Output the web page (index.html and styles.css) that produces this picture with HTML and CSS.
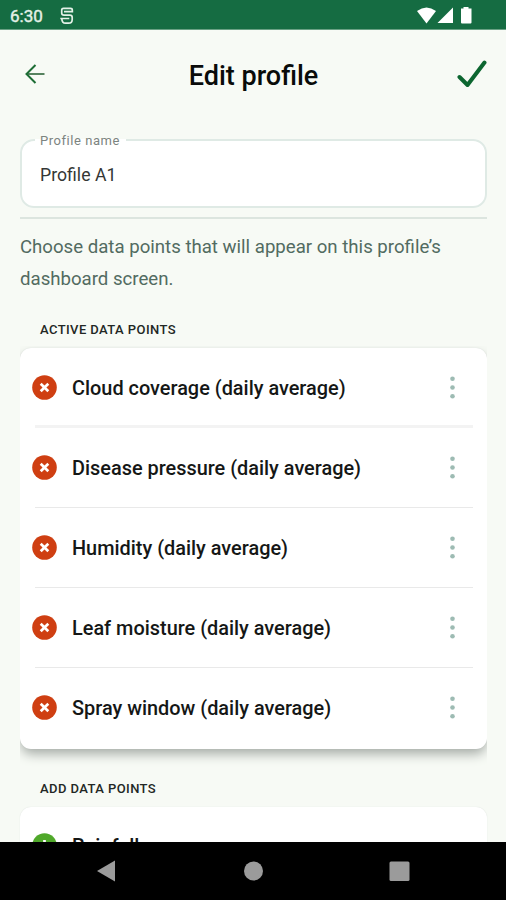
FILE: index.html
```html
<!DOCTYPE html>
<html lang="en">
<head>
<meta charset="utf-8">
<title>Edit profile</title>
<link rel="stylesheet" href="styles.css">
</head>
<body>
<svg class="defs" width="0" height="0" aria-hidden="true">
  <symbol id="remove" viewBox="0 0 25 25"><circle cx="12.5" cy="12.5" r="12.3" fill="#cf3f12"/><path d="M8.7 8.7l7.6 7.6M16.300 8.700l-7.600 7.600" stroke="#fff" stroke-width="2.7"/></symbol>
  <symbol id="more" viewBox="0 0 6 24"><g fill="#9dbbb3"><circle cx="2.5" cy="2.700" r="2.3"/><circle cx="2.5" cy="11.500" r="2.3"/><circle cx="2.5" cy="20.200" r="2.3"/></g></symbol>
</svg>
<div class="phone">
  <div class="status">
    <span class="time">6:30</span>
    <svg class="app-mark" width="14" height="18" viewBox="0 0 14 18" fill="none" stroke="#e4f1e7" stroke-width="1.7"><path d="M12.300 4.500V3Q12.300 1.400 10.500 1.400H3.500Q1.700 1.400 1.700 3.200V6Q1.700 8.200 4 8.200H9.800Q12.200 8.200 12.200 10.500V12.500Q12.200 16.200 8.500 16.200H5.500Q2 16.200 1.800 11.700M4 4.700H13.200M.3 11.500H9.300"/></svg>
    <svg class="signals" width="56" height="17" viewBox="0 0 56 17" fill="#fff"><path d="M0 4Q9.500-3 19 4L9.500 16.500Z"/><path d="M36 .5V16H20.500Z"/><path d="M46.500 0h5v1.500h3V15.500Q54.500 16.500 53.500 16.500H45Q44 16.500 44 15.500V1.500h2.500Z"/></svg>
  </div>
  <header class="header">
    <svg width="20" height="20" viewBox="0 0 20 20" fill="none" stroke-width="2"><path d="M1.500 10H19.500" stroke="#56825f"/><path d="M10.500 1L1.500 10l9 9" stroke="#1d6d35"/></svg>
    <h1>Edit profile</h1>
    <svg width="30" height="28" viewBox="0 0 30 28" fill="none" stroke="#0c6630" stroke-width="4" stroke-linecap="round" stroke-linejoin="round"><path d="M2.500 17L10.500 25L27.500 2.500"/></svg>
  </header>
  <main>
    <fieldset class="field">
      <legend>Profile name</legend>
      <div class="value">Profile A1</div>
    </fieldset>
    <p class="intro"><span>Choose data points that will appear on this profile’s</span><span>dashboard screen.</span></p>
    <h2>ACTIVE DATA POINTS</h2>
    <div class="shadow-clip">
      <ul class="card">
        <li><svg class="badge"><use href="#remove"/></svg><span>Cloud coverage (daily average)</span><svg class="more"><use href="#more"/></svg></li>
        <li><svg class="badge"><use href="#remove"/></svg><span>Disease pressure (daily average)</span><svg class="more"><use href="#more"/></svg></li>
        <li><svg class="badge"><use href="#remove"/></svg><span>Humidity (daily average)</span><svg class="more"><use href="#more"/></svg></li>
        <li><svg class="badge"><use href="#remove"/></svg><span>Leaf moisture (daily average)</span><svg class="more"><use href="#more"/></svg></li>
        <li><svg class="badge"><use href="#remove"/></svg><span>Spray window (daily average)</span><svg class="more"><use href="#more"/></svg></li>
      </ul>
    </div>
    <h2 class="add">ADD DATA POINTS</h2>
    <ul class="card next">
      <li><svg class="badge" viewBox="0 0 25 25"><circle cx="12.500" cy="12.500" r="12.300" fill="#4fa82a"/><path d="M12.500 7v11M7 12.500h11" stroke="#fff" stroke-width="2.700"/></svg><span>Rainfall</span></li>
    </ul>
  </main>
  <nav class="nav">
    <svg width="506" height="58" viewBox="0 0 506 58" fill="#9b9b9b"><path d="M97 29L115 18.500V39.500Z"/><circle cx="253.500" cy="29" r="9.500"/><rect x="389.500" y="19.500" width="20" height="19.500" rx="1.500"/></svg>
  </nav>
</div>
</body>
</html>
```
FILE: styles.css
```css
* { box-sizing: border-box; }
body { margin: 0; font-family: Roboto, "Liberation Sans", sans-serif; }
.defs { position: absolute; }
.phone { width: 506px; height: 900px; display: flex; flex-direction: column; overflow: hidden; background: #f7faf5; }
.status { flex: none; height: 30px; display: flex; align-items: center; padding: 2px 33px 0 10px; background: #156c42; border-bottom: 1px solid #69a184; }
.time { color: #e4f1e7; font-size: 17px; -webkit-text-stroke: .4px #e4f1e7; }
.app-mark { margin-left: 17px; }
.signals { margin-left: auto; }
.header { flex: none; height: 88px; display: flex; align-items: center; justify-content: space-between; padding: 0 19px 0 25px; }
h1 { margin: 3px 0 0 5px; font-size: 27px; font-weight: 500; line-height: 32px; color: #090b0a; }
main { flex: 1; min-height: 0; overflow: hidden; padding: 13px 19px 0 20px; }
.field { margin: 0; padding: 0 18px; height: 77px; border: 2px solid #dfeae5; border-radius: 14px; background: #fff; }
.field legend { padding: 0 6px 0 5px; margin-left: -5px; height: 17px; line-height: 19px; font-size: 13px; letter-spacing: .55px; color: #7c8480; }
.value { padding-top: 14px; font-size: 19px; line-height: 26px; color: #343735; transform: scaleX(.93); transform-origin: left; }
.intro { margin: 9px 0 0; padding-top: 12px; border-top: 2px solid #dce5df; font-size: 19px; line-height: 32px; color: #526b61; }
.intro span { display: block; white-space: nowrap; transform: scaleX(.98); transform-origin: left; }
h2 { margin: 26px 0 0; padding-left: 20px; font-size: 13px; line-height: 18px; font-weight: 500; letter-spacing: .42px; color: #222724; }
.shadow-clip { overflow: hidden; margin-top: 7px; padding: 2px 0 19px; }
.card { list-style: none; margin: 0; padding: 0 14px 0 12px; border-radius: 11px; background: #fff; box-shadow: 0 6px 12px -1px #a5aba6, 0 0 1px #d3d9d4; height: 401px; }
.card li { height: 80px; display: flex; align-items: center; font-size: 19.9px; font-weight: 500; color: #151716; background: linear-gradient(#e9e9e9, #e9e9e9) 3px bottom / 100% 1px no-repeat; }
.card li:first-child { background: linear-gradient(#f3f3f3, #f3f3f3) 3px bottom / 100% 3px no-repeat; }
.card li:last-child { background: none; }
.badge { width: 25px; height: 25px; margin: 0 15px 1px 0; }
.more { width: 6px; height: 24px; margin: 0 17px 0 auto; }
h2.add { margin-top: 12px; }
.next { margin-top: 9px; box-shadow: 0 0 1px #d3d9d4; }
.next li { height: 78px; }
.nav { flex: none; height: 58px; background: #000; }
.nav svg { display: block; }
```
